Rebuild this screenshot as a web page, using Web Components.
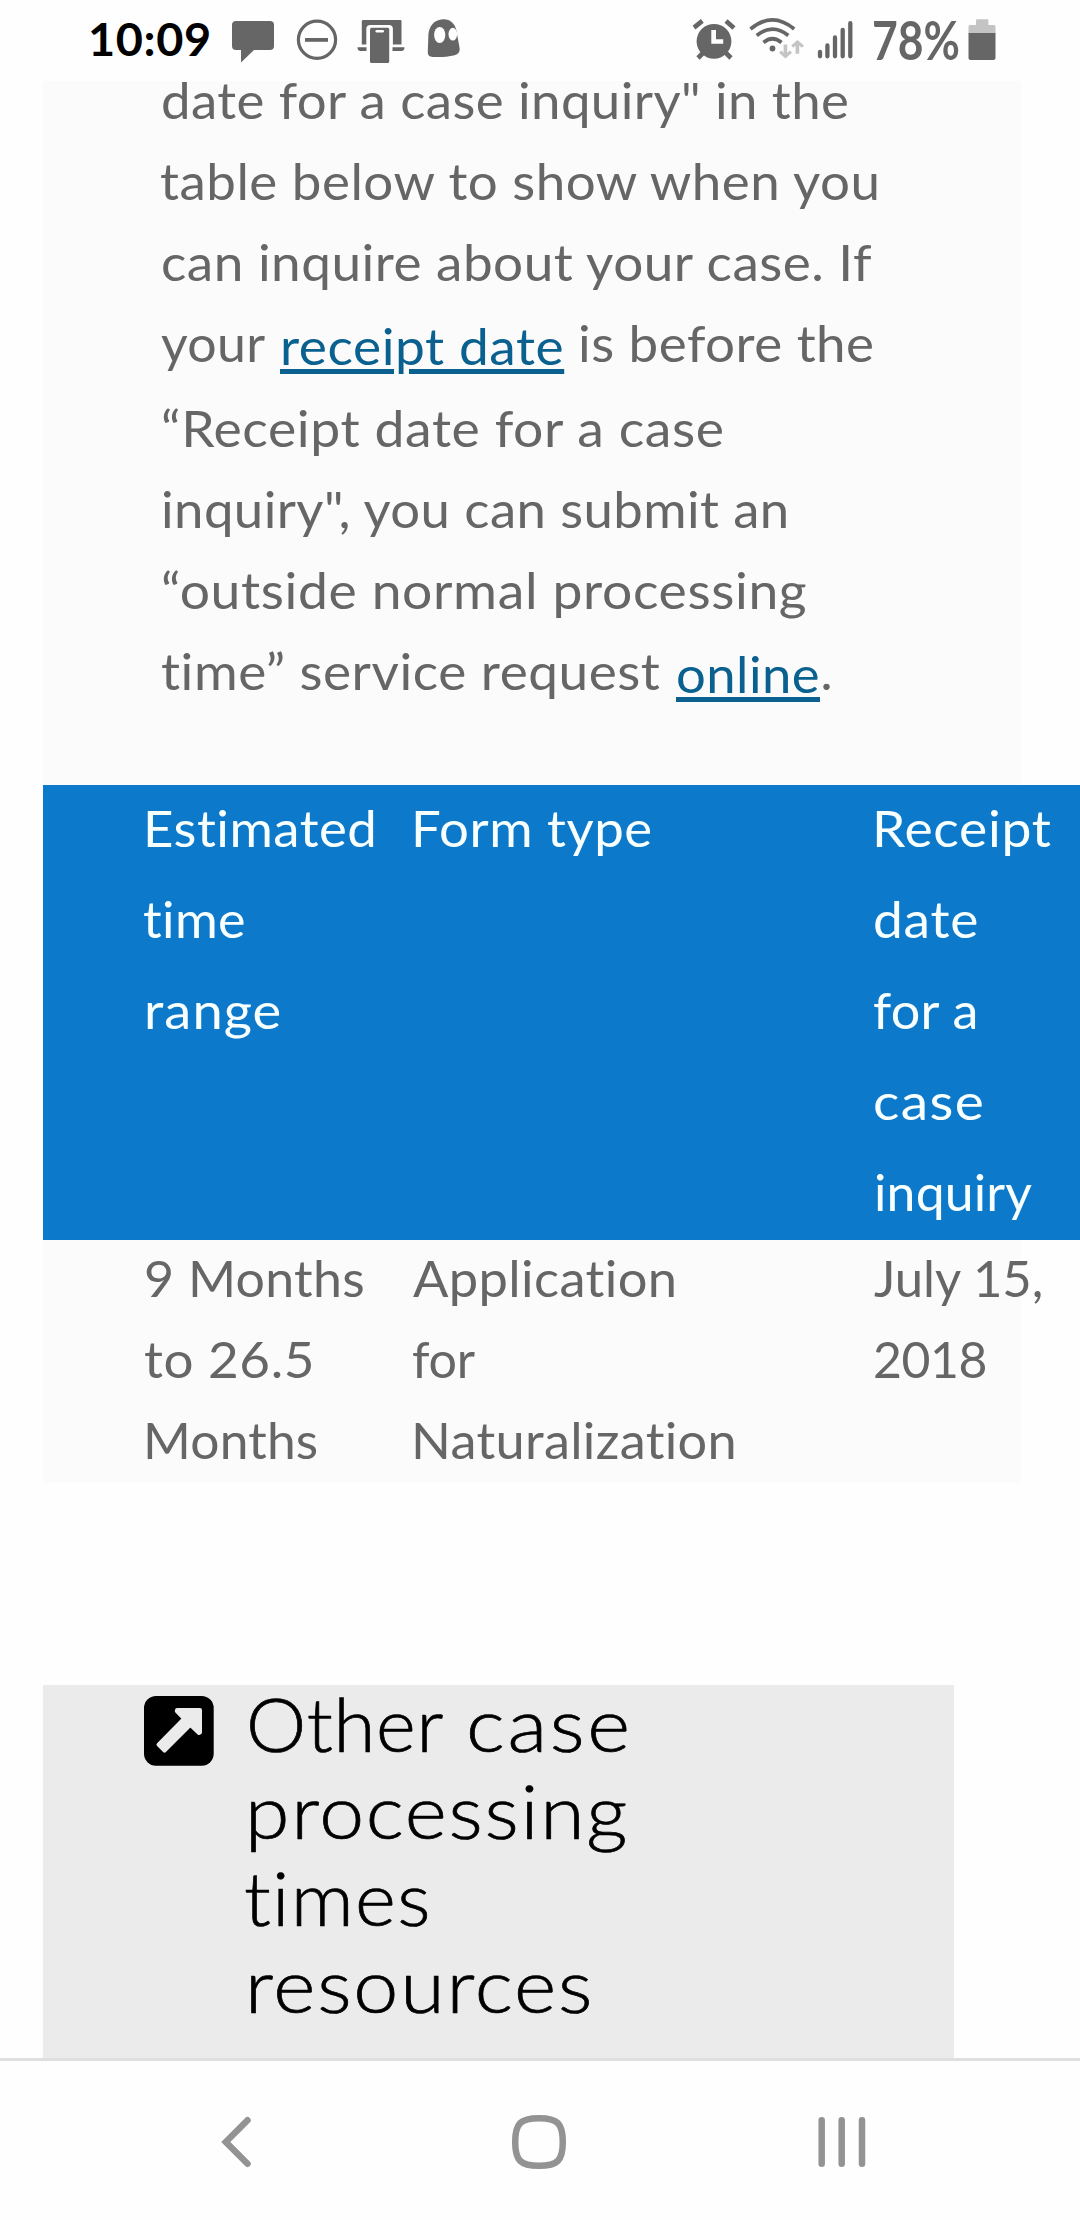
<!DOCTYPE html>
<html lang="en">
<head>
<meta charset="utf-8">
<title>Case processing times</title>
<style>
  html,
  body {
    margin: 0;
    padding: 0;
    background: #fefefe;
    font-family: Lato, "Open Sans", sans-serif;
    overflow: hidden;
  }
</style>
</head>
<body>
<phone-screen>
  <status-bar slot="status"></status-bar>

  <info-panel>
    <text-row><text-run at="2" span="685">date for a case inquiry" in the</text-run></text-row>
    <text-row><text-run at="0.5" span="720">table below to show when you</text-run></text-row>
    <text-row><text-run at="2" span="711">can inquire about your case. If</text-run></text-row>
    <text-row linked>
      <text-run at="0" span="104.5">your</text-run>
      <text-run link at="18" span="278.5">receipt date</text-run>
      <text-run at="18.5" span="292">is before the</text-run>
    </text-row>
    <text-row><text-run at="2.5" span="560">“Receipt date for a case</text-run></text-row>
    <text-row><text-run at="2.5" span="625">inquiry", you can submit an</text-run></text-row>
    <text-row><text-run at="2.5" span="643">“outside normal processing</text-run></text-row>
    <text-row linked>
      <text-run at="1" span="499">time” service request</text-run>
      <text-run link at="17" span="139.5">online</text-run>
      <text-run at="5" span="5">.</text-run>
    </text-row>

    <times-table slot="table">
      <times-row head>
        <times-cell>
          <text-row><text-run at="3" span="227">Estimated</text-run></text-row>
          <text-row><text-run at="0" span="100.5">time</text-run></text-row>
          <text-row><text-run at="3" span="132">range</text-run></text-row>
        </times-cell>
        <times-cell>
          <text-row><text-run at="3" span="235">Form type</text-run></text-row>
        </times-cell>
        <times-cell>
          <text-row><text-run at="3.2" span="174.5">Receipt</text-run></text-row>
          <text-row><text-run at="2.5" span="101.3">date</text-run></text-row>
          <text-row><text-run at="0.8" span="103">for a</text-run></text-row>
          <text-row><text-run at="2.5" span="106.5">case</text-run></text-row>
          <text-row><text-run at="3.2" span="155.7">inquiry</text-run></text-row>
        </times-cell>
      </times-row>
      <times-row>
        <times-cell>
          <text-row><text-run at="2" span="217.5">9 Months</text-run></text-row>
          <text-row><text-run at="0.6" span="166.7">to 26.5</text-run></text-row>
          <text-row><text-run at="3.4" span="170">Months</text-run></text-row>
        </times-cell>
        <times-cell>
          <text-row><text-run at="0.5" span="262.5">Application</text-run></text-row>
          <text-row><text-run at="0.5" span="62.5">for</text-run></text-row>
          <text-row><text-run at="3.3" span="320">Naturalization</text-run></text-row>
        </times-cell>
        <times-cell>
          <text-row><text-run at="0.8" span="168">July 15,</text-run></text-row>
          <text-row><text-run at="1.7" span="111">2018</text-run></text-row>
        </times-cell>
      </times-row>
    </times-table>
  </info-panel>

  <resource-card>
    <text-row>
      <text-run at="4" span="193">Other</text-run>
      <text-run at="26.5" span="158">case</text-run>
    </text-row>
    <text-row><text-run at="6" span="374">processing</text-run></text-row>
    <text-row><text-run at="0.4" span="182">times</text-run></text-row>
    <text-row><text-run at="6" span="337">resources</text-run></text-row>
  </resource-card>

  <nav-bar slot="nav"></nav-bar>
</phone-screen>

<script>
class BaseElement extends HTMLElement {
  constructor() {
    super();
    this.attachShadow({ mode: "open" });
  }

  connectedCallback() {
    this.shadowRoot.innerHTML = this.template();
  }

  template() {
    return `<slot></slot>`;
  }
}

const ruler = document.createElement("canvas").getContext("2d");

// A run of text fitted to "span" pixels: part of the difference goes into
// the glyph width, the rest into tracking. "at" is the gap in front of it,
// "squeeze" fits with the glyph width alone.
class TextRun extends BaseElement {
  template() {
    return `
      <style>
        :host {
          display: block;
          flex: none;
        }

        :host([link]) {
          color: #0a6190;
          margin-top: 3px;
        }

        span {
          display: inline-block;
          white-space: pre;
          transform-origin: 0 50%;
        }

        :host([link]) span {
          text-decoration: underline;
          text-decoration-thickness: 5px;
          text-underline-offset: 4px;
        }
      </style>
      <span></span>
    `;
  }

  connectedCallback() {
    super.connectedCallback();
    const text = this.getAttribute("text") || this.textContent;
    const span = this.shadowRoot.querySelector("span");
    span.textContent = text;
    this.fit(span, text);
  }

  fit(span, text) {
    const width = parseFloat(this.getAttribute("span"));
    const style = getComputedStyle(this);
    ruler.font = `${style.fontWeight} ${style.fontSize} ${style.fontFamily}`;
    const box = ruler.measureText(text);
    const ink = box.actualBoundingBoxLeft + box.actualBoundingBoxRight;
    const share = this.hasAttribute("squeeze") ? 1 : 0.65;
    const scale = text.length > 1 ? 1 + (width / ink - 1) * share : 1;

    this.style.marginLeft = `${this.getAttribute("at") || 0}px`;
    this.style.width = `${width}px`;
    span.style.marginLeft = `${box.actualBoundingBoxLeft * scale}px`;
    span.style.transform = `scaleX(${scale})`;

    if (text.length > 1) {
      span.style.letterSpacing = `${(width / scale - ink) / (text.length - 1)}px`;
    }
  }
}

class TextRow extends BaseElement {
  template() {
    return `
      <style>
        :host {
          display: flex;
          align-items: flex-start;
          height: var(--row-height);
          line-height: var(--row-leading);
        }

        :host([linked]) {
          height: calc(var(--row-height) + 4px);
        }
      </style>
      <slot></slot>
    `;
  }
}

class PhoneScreen extends BaseElement {
  template() {
    return `
      <style>
        :host {
          display: flex;
          flex-direction: column;
          width: 1080px;
          height: 2220px;
          overflow: hidden;
          background: #fefefe;
        }

        main {
          flex: 1;
          min-height: 0;
          overflow: hidden;
          padding-left: 43px;
        }
      </style>
      <slot name="status"></slot>
      <main><slot></slot></main>
      <slot name="nav"></slot>
    `;
  }
}

class StatusBar extends BaseElement {
  template() {
    return `
      <style>
        :host {
          display: flex;
          justify-content: space-between;
          height: 81px;
          padding: 0 84px 0 90px;
          box-sizing: border-box;
          color: #666;
        }

        div {
          display: flex;
        }

        svg {
          display: block;
          height: 81px;
          fill: #666;
        }

        .clock {
          color: #000;
          font-size: 45px;
          font-weight: 700;
          line-height: 79px;
        }

        .level {
          font-size: 53px;
          font-weight: 700;
          line-height: 79px;
        }

        .stroke {
          fill: none;
          stroke: #666;
        }

        .light {
          fill: #c4c4c4;
        }

        .cut {
          fill: #fefefe;
        }
      </style>
      <div>
        <text-run class="clock" text="10:09" span="119"></text-run>
        <svg width="42" viewBox="232 0 42 81" style="margin-left: 23px">
          <path d="M236 21h34a4 4 0 0 1 4 4v21a4 4 0 0 1-4 4h-16l-13 12.5V50h-5a4 4 0 0 1-4-4V25a4 4 0 0 1 4-4z"/>
        </svg>
        <svg width="42" viewBox="296 0 42 81" style="margin-left: 22px">
          <circle class="stroke" cx="317" cy="39.7" r="18.6" stroke-width="3.2"/>
          <path d="M305 38h23v3.8h-23z"/>
        </svg>
        <svg width="48" viewBox="356.5 0 48 81" style="margin-left: 18.5px">
          <path d="M362 20h38a1 1 0 0 1 1 1v23.5h-39.7V21z"/>
          <path class="cut" d="M365.8 45V29q0-4 4-4h18.6q4 0 4 4v16z"/>
          <rect x="369.5" y="27.7" width="19.2" height="35.3" rx="1.5"/>
          <rect class="cut" x="375" y="30" width="8.5" height="2.4" rx="1.2"/>
          <path d="M357 47.3h9v3.8h-6q-3 0-3-3.8zM392 47.3h12q0 3.8-3 3.8h-9z"/>
        </svg>
        <svg width="34" viewBox="427 0 34 81" style="margin-left: 22.5px">
          <path d="M443 19.2c7-.4 12 4.5 13.4 11.2l3.2 17.6c.4 4-1.4 6-5 7.2-6.6 1.8-14.6 1.9-21.6 1.7-4.2-.2-5.3-1.9-5.2-5.4l.6-17c.6-8.5 5.6-14.7 14.6-15.3z"/>
          <ellipse class="cut" cx="439.7" cy="35" rx="5.6" ry="8"/>
          <ellipse class="cut" cx="452.8" cy="34.2" rx="4.3" ry="6.4"/>
        </svg>
      </div>
      <div>
        <svg width="44" viewBox="691 0 44 81">
          <circle cx="713" cy="41.3" r="17.4"/>
          <path class="stroke" stroke-width="4.6" d="M693 27.6l8.3-6.7M725 20.9l8 7M697 58l6-6M730 58l-6-6"/>
          <path class="cut" d="M710.3 30h4.7v9.3h7.2v4.4h-11.9z"/>
        </svg>
        <svg width="56" viewBox="748 0 56 81" style="margin-left: 13px">
          <g class="stroke" stroke-width="3.7">
            <path d="M749.5 29Q771.3 10.8 793.2 29"/>
            <path d="M755.7 35.5Q771.5 22.7 787.3 35.5"/>
            <path d="M762.5 42.5Q771.4 35 780.5 42.5"/>
          </g>
          <circle cx="771.5" cy="48.5" r="2.9"/>
          <path class="light" d="M782.6 44.5h3.6v8.3l2.6-2.3 2.3 2.2-6.7 5.7-6.3-5.7 2.2-2.2 2.3 2.3zM794.6 53.7h3.6v-8.3l2.6 2.3 2.2-2.2-6.6-5.6-6.2 5.6 2.1 2.2 2.3-2.3z"/>
        </svg>
        <svg width="36" viewBox="816 0 36 81" style="margin-left: 12px">
          <path class="stroke" stroke-width="4.3" stroke-linecap="round" d="M819 52v4.3M826.4 45.5v10.8M834 37.5v18.8M841.7 29.8v26.5M849.3 23.2v33.1"/>
        </svg>
        <text-run class="level" text="78%" at="20.7" span="85" squeeze></text-run>
        <svg width="28" viewBox="967.5 0 28 81" style="margin-left: 9.8px">
          <path class="light" d="M975.5 25v-4.5q0-1.2 1.2-1.2h10q1.2 0 1.2 1.2V25h5.6q1.5 0 1.5 1.5V34h-27v-7.5q0-1.5 1.5-1.5z"/>
          <path d="M968 33h27v25q0 2-2 2h-23q-2 0-2-2z"/>
        </svg>
      </div>
    `;
  }
}

class InfoPanel extends BaseElement {
  template() {
    return `
      <style>
        :host {
          display: block;
          width: 978px;
          margin-top: -19px;
          background: #fbfbfb;
          color: #666;
          font-size: 51px;
          --row-height: 81px;
          --row-leading: 75px;
        }

        .copy {
          padding: 0 0 67px 118px;
        }
      </style>
      <div class="copy"><slot></slot></div>
      <slot name="table"></slot>
    `;
  }
}

class TimesTable extends BaseElement {
  template() {
    return `
      <style>
        :host {
          display: block;
          width: 1037px;
        }
      </style>
      <slot></slot>
    `;
  }
}

class TimesRow extends BaseElement {
  template() {
    return `
      <style>
        :host {
          display: grid;
          grid-template-columns: 268px 461px 1fr;
          padding-left: 101px;
        }

        :host([head]) {
          background: #0d79ca;
          color: #f8ffff;
          --row-height: 91px;
          --row-leading: 85px;
        }
      </style>
      <slot></slot>
    `;
  }
}

class TimesCell extends BaseElement {
  template() {
    return `
      <style>
        :host {
          display: block;
          min-width: 0;
        }
      </style>
      <slot></slot>
    `;
  }
}

class ResourceCard extends BaseElement {
  template() {
    return `
      <style>
        :host {
          display: flex;
          gap: 32px;
          width: 911px;
          height: 400px;
          margin-top: 202px;
          padding-left: 101px;
          box-sizing: border-box;
          background: #ebebeb;
          color: #000;
          font-size: 74px;
          font-weight: 300;
          -webkit-text-stroke: 0.7px #000;
          --row-height: 87px;
          --row-leading: 77px;
        }

        svg {
          flex: none;
          margin-top: 11px;
        }
      </style>
      <svg width="70" height="70" viewBox="0 0 70 70">
        <rect width="69.7" height="69.7" rx="12"/>
        <path fill="#ebebeb" stroke="#ebebeb" stroke-width="4" stroke-linejoin="round"
          d="M33 14h23v22.5l-1 .5-8.7-8.2-25.8 25.8-6-6 25.6-26-7.3-7.4z"/>
      </svg>
      <div><slot></slot></div>
    `;
  }
}

class NavBar extends BaseElement {
  template() {
    return `
      <style>
        :host {
          display: flex;
          align-items: center;
          height: 162px;
          box-sizing: border-box;
          padding: 3px 0 0 221px;
          border-top: 3px solid #dfdfdf;
          background: #fefefe;
        }

        svg {
          flex: none;
          fill: none;
          stroke: #939393;
          stroke-width: 6.5;
        }
      </style>
      <svg width="30" height="54" viewBox="0 0 30 54">
        <path stroke-linecap="round" stroke-linejoin="miter" d="M26.5 5.2L4.8 27l21.7 21.8"/>
      </svg>
      <svg width="56" height="56" viewBox="0 0 56 56" style="margin-left: 260px">
        <path d="M28 4.2C46.5 4.2 51.8 9.5 51.8 28S46.5 51.8 28 51.8 4.2 46.5 4.2 28 9.5 4.2 28 4.2z"/>
      </svg>
      <svg width="50" height="54" viewBox="0 0 50 54" style="margin-left: 250px">
        <path stroke-linecap="round" d="M4.7 5.3v43.4M24.7 5.3v43.4M45 5.3v43.4"/>
      </svg>
    `;
  }
}

customElements.define("phone-screen", PhoneScreen);
customElements.define("status-bar", StatusBar);
customElements.define("info-panel", InfoPanel);
customElements.define("times-table", TimesTable);
customElements.define("times-row", TimesRow);
customElements.define("times-cell", TimesCell);
customElements.define("resource-card", ResourceCard);
customElements.define("nav-bar", NavBar);
customElements.define("text-row", TextRow);
customElements.define("text-run", TextRun);
</script>
</body>
</html>
